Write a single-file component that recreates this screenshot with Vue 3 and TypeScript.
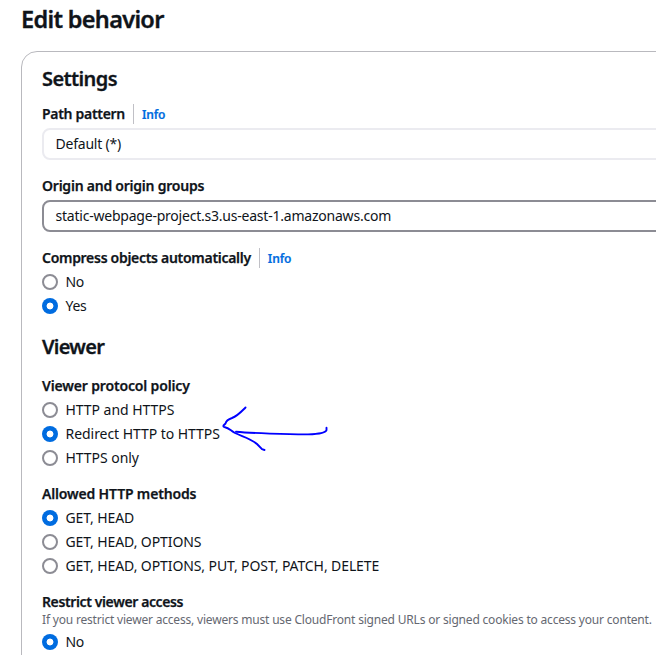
<script setup lang="ts">
interface RadioGroup {
  key: string
  label: string
  description?: string
  selected: number
  options: string[]
}

const compress: RadioGroup = {
  key: 'compress',
  label: 'Compress objects automatically',
  selected: 1,
  options: ['No', 'Yes'],
}

const viewerGroups: RadioGroup[] = [
  {
    key: 'protocol',
    label: 'Viewer protocol policy',
    selected: 1,
    options: ['HTTP and HTTPS', 'Redirect HTTP to HTTPS', 'HTTPS only'],
  },
  {
    key: 'methods',
    label: 'Allowed HTTP methods',
    selected: 0,
    options: ['GET, HEAD', 'GET, HEAD, OPTIONS', 'GET, HEAD, OPTIONS, PUT, POST, PATCH, DELETE'],
  },
  {
    key: 'restrict',
    label: 'Restrict viewer access',
    description:
      'If you restrict viewer access, viewers must use CloudFront signed URLs or signed cookies to access your content.',
    selected: 0,
    options: ['No'],
  },
]
</script>

<template>
  <main class="page">
    <h1 class="title">Edit behavior</h1>
    <section class="card">
      <h2 class="heading">Settings</h2>
      <div class="fields">
        <div class="field path">
          <div class="label-row">
            <span class="label">Path pattern</span>
            <a class="info">Info</a>
          </div>
          <div class="input disabled"><span class="value">Default (*)</span></div>
        </div>
        <div class="field origin">
          <div class="label-row"><span class="label">Origin and origin groups</span></div>
          <div class="input"><span class="value">static-webpage-project.s3.us-east-1.amazonaws.com</span></div>
        </div>
        <div class="field" :class="compress.key">
          <div class="label-row">
            <span class="label">{{ compress.label }}</span>
            <a class="info">Info</a>
          </div>
          <div v-for="(o, i) in compress.options" :key="o" class="option">
            <span class="radio" :class="{ checked: i === compress.selected }"></span>
            <span class="option-text">{{ o }}</span>
          </div>
        </div>
      </div>
      <h2 class="heading viewer">Viewer</h2>
      <div class="fields">
        <div v-for="g in viewerGroups" :key="g.key" class="field" :class="g.key">
          <div class="label-block">
            <div class="label-row"><span class="label">{{ g.label }}</span></div>
            <p v-if="g.description" class="description">{{ g.description }}</p>
          </div>
          <div v-for="(o, i) in g.options" :key="o" class="option">
            <span class="radio" :class="{ checked: i === g.selected }"></span>
            <span class="option-text">{{ o }}</span>
          </div>
        </div>
      </div>
    </section>
    <svg class="arrow" viewBox="0 0 110 48" fill="none">
      <path d="M25.5 3.500C21 8 17.500 12 12 14C7.500 15.500 6 17.500 5.500 19.500L3.500 21.500Q3 23 5 23.300C9 24 11 27 15 29C22 32.500 30 34 37 40L42 45.200L44.500 46" />
      <path d="M16 27.700C30 29 68 30.500 88 30.400C99 30 106 29 106.500 26V23.800" />
    </svg>
  </main>
</template>

<style>
html,
body {
  overflow: hidden;
  background: #fff;
}
</style>

<style scoped>
.page {
  position: relative;
  box-sizing: border-box;
  width: 100vw;
  height: 100vh;
  padding: 4px 0 0 21px;
  overflow: hidden;
  background: #fff;
  color: #0f141a;
  font-family: 'Noto Sans', 'Open Sans', sans-serif;
  font-size: 14px;
  line-height: 20px;
  white-space: nowrap;
}
.title {
  margin: 0 0 17px;
  font-size: 23.5px;
  font-weight: 600;
  line-height: 30px;
  letter-spacing: -0.68px;
  -webkit-text-stroke: 0.35px currentColor;
}
.card {
  box-sizing: border-box;
  width: 900px;
  height: 800px;
  padding: 15px 20px;
  border: 1px solid #b9b9be;
  border-radius: 16px;
}
.heading {
  margin: 0 0 13px;
  font-size: 20px;
  font-weight: 600;
  line-height: 24px;
  letter-spacing: -0.6px;
  -webkit-text-stroke: 0.3px currentColor;
}
.viewer {
  margin: 19px 0 17px;
  letter-spacing: -0.75px;
}
.fields {
  display: flex;
  flex-direction: column;
  gap: 16px;
}
.field {
  display: flex;
  flex-direction: column;
  gap: 4px;
}
.label-row {
  display: flex;
  height: 20px;
}
.label {
  font-weight: 600;
  letter-spacing: -0.3px;
  -webkit-text-stroke: 0.25px currentColor;
}
.origin .label {
  letter-spacing: -0.23px;
}
.compress .label {
  letter-spacing: -0.29px;
}
.protocol .label {
  letter-spacing: -0.15px;
}
.methods .label {
  letter-spacing: -0.16px;
}
.restrict .label {
  letter-spacing: -0.38px;
}
.info {
  margin-left: 8px;
  padding-left: 8px;
  border-left: 1px solid #c0c0c6;
  color: #006ce0;
  font-size: 12px;
  font-weight: 600;
  line-height: 22px;
  letter-spacing: -0.15px;
  -webkit-text-stroke: 0.2px currentColor;
}
.input {
  box-sizing: border-box;
  display: flex;
  align-items: center;
  height: 32px;
  padding-left: 11.5px;
  border: 2px solid #8c8c94;
  border-radius: 8px;
}
.input.disabled {
  border-color: #ebebf0;
}
.value {
  letter-spacing: -0.22px;
}
.option {
  display: flex;
  align-items: center;
  gap: 7.5px;
  height: 20px;
}
.option-text {
  letter-spacing: -0.1px;
}
.protocol .option-text {
  letter-spacing: -0.05px;
}
.compress .option-text,
.restrict .option-text {
  letter-spacing: -0.3px;
}
.radio {
  box-sizing: border-box;
  width: 16px;
  height: 16px;
  border: 2px solid #8c8c94;
  border-radius: 50%;
  background: #fff;
}
.radio.checked {
  border: none;
  background: radial-gradient(circle, #fff 3px, #006ce0 3.8px);
}
.description {
  margin: 0;
  color: #656871;
  font-size: 12px;
  line-height: 16px;
  letter-spacing: -0.19px;
}
.arrow {
  position: absolute;
  left: 220px;
  top: 404px;
  width: 110px;
  height: 48px;
  stroke: #0000ff;
  stroke-width: 1.9;
  stroke-linecap: round;
  stroke-linejoin: round;
}
</style>
